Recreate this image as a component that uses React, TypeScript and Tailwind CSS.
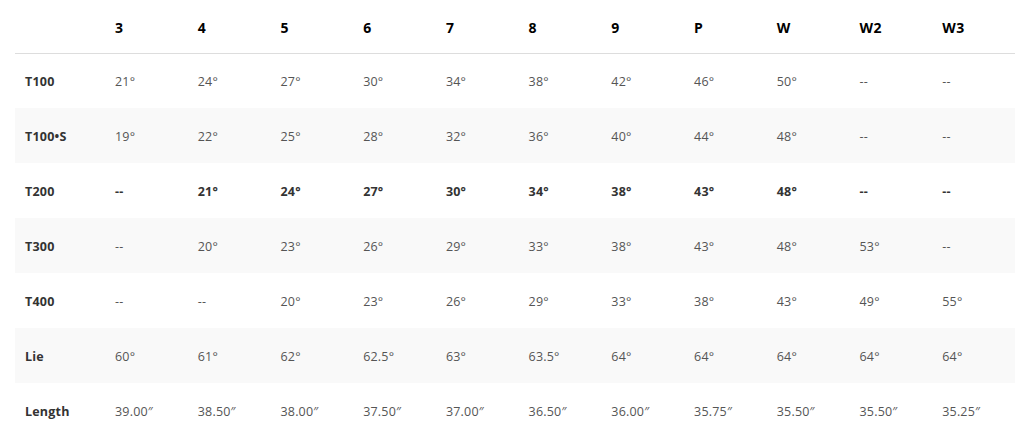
import React from "react";

const cols = ["3", "4", "5", "6", "7", "8", "9", "P", "W", "W2", "W3"];
const rows: { label: string; bold?: boolean; vals: string[] }[] = [
  { label: "T100", vals: ["21°", "24°", "27°", "30°", "34°", "38°", "42°", "46°", "50°", "--", "--"] },
  { label: "T100•S", vals: ["19°", "22°", "25°", "28°", "32°", "36°", "40°", "44°", "48°", "--", "--"] },
  { label: "T200", bold: true, vals: ["--", "21°", "24°", "27°", "30°", "34°", "38°", "43°", "48°", "--", "--"] },
  { label: "T300", vals: ["--", "20°", "23°", "26°", "29°", "33°", "38°", "43°", "48°", "53°", "--"] },
  { label: "T400", vals: ["--", "--", "20°", "23°", "26°", "29°", "33°", "38°", "43°", "49°", "55°"] },
  { label: "Lie", vals: ["60°", "61°", "62°", "62.5°", "63°", "63.5°", "64°", "64°", "64°", "64°", "64°"] },
  { label: "Length", vals: ["39.00″", "38.50″", "38.00″", "37.50″", "37.00″", "36.50″", "36.00″", "35.75″", "35.50″", "35.50″", "35.25″"] },
];

export default function App() {
  return (
    <div className="w-[1018px] h-[441px] bg-white pl-[15px] pr-[3px]" style={{ fontFamily: "'Open Sans', 'Noto Sans', sans-serif" }}>
      <table className="w-[1000px] border-collapse table-fixed">
        <colgroup>
          <col className="w-[90px]" />
          {cols.map((c) => (
            <col key={c} />
          ))}
        </colgroup>
        <thead>
          <tr className="h-[53px] border-b border-[#dddddd]">
            <th />
            {cols.map((c) => (
              <th key={c} className="text-left px-[10px] pt-[2px] text-[14px] font-bold text-black tracking-[0.5px]">
                {c}
              </th>
            ))}
          </tr>
        </thead>
        <tbody>
          {rows.map((r, i) => (
            <tr key={r.label} className={`h-[55px] ${i % 2 === 1 ? "bg-[#f9f9f9]" : "bg-white"}`}>
              <td className="px-[10px] pt-[4px] text-[12.5px] font-bold text-[#333333] tracking-[0.2px]">{r.label}</td>
              {r.vals.map((v, j) => (
                <td
                  key={j}
                  className={`px-[10px] pt-[4px] text-[12.5px] tracking-[0.2px] ${r.bold ? "font-bold text-[#333333]" : "text-[#555555]"}`}
                >
                  {v}
                </td>
              ))}
            </tr>
          ))}
        </tbody>
      </table>
    </div>
  );
}
